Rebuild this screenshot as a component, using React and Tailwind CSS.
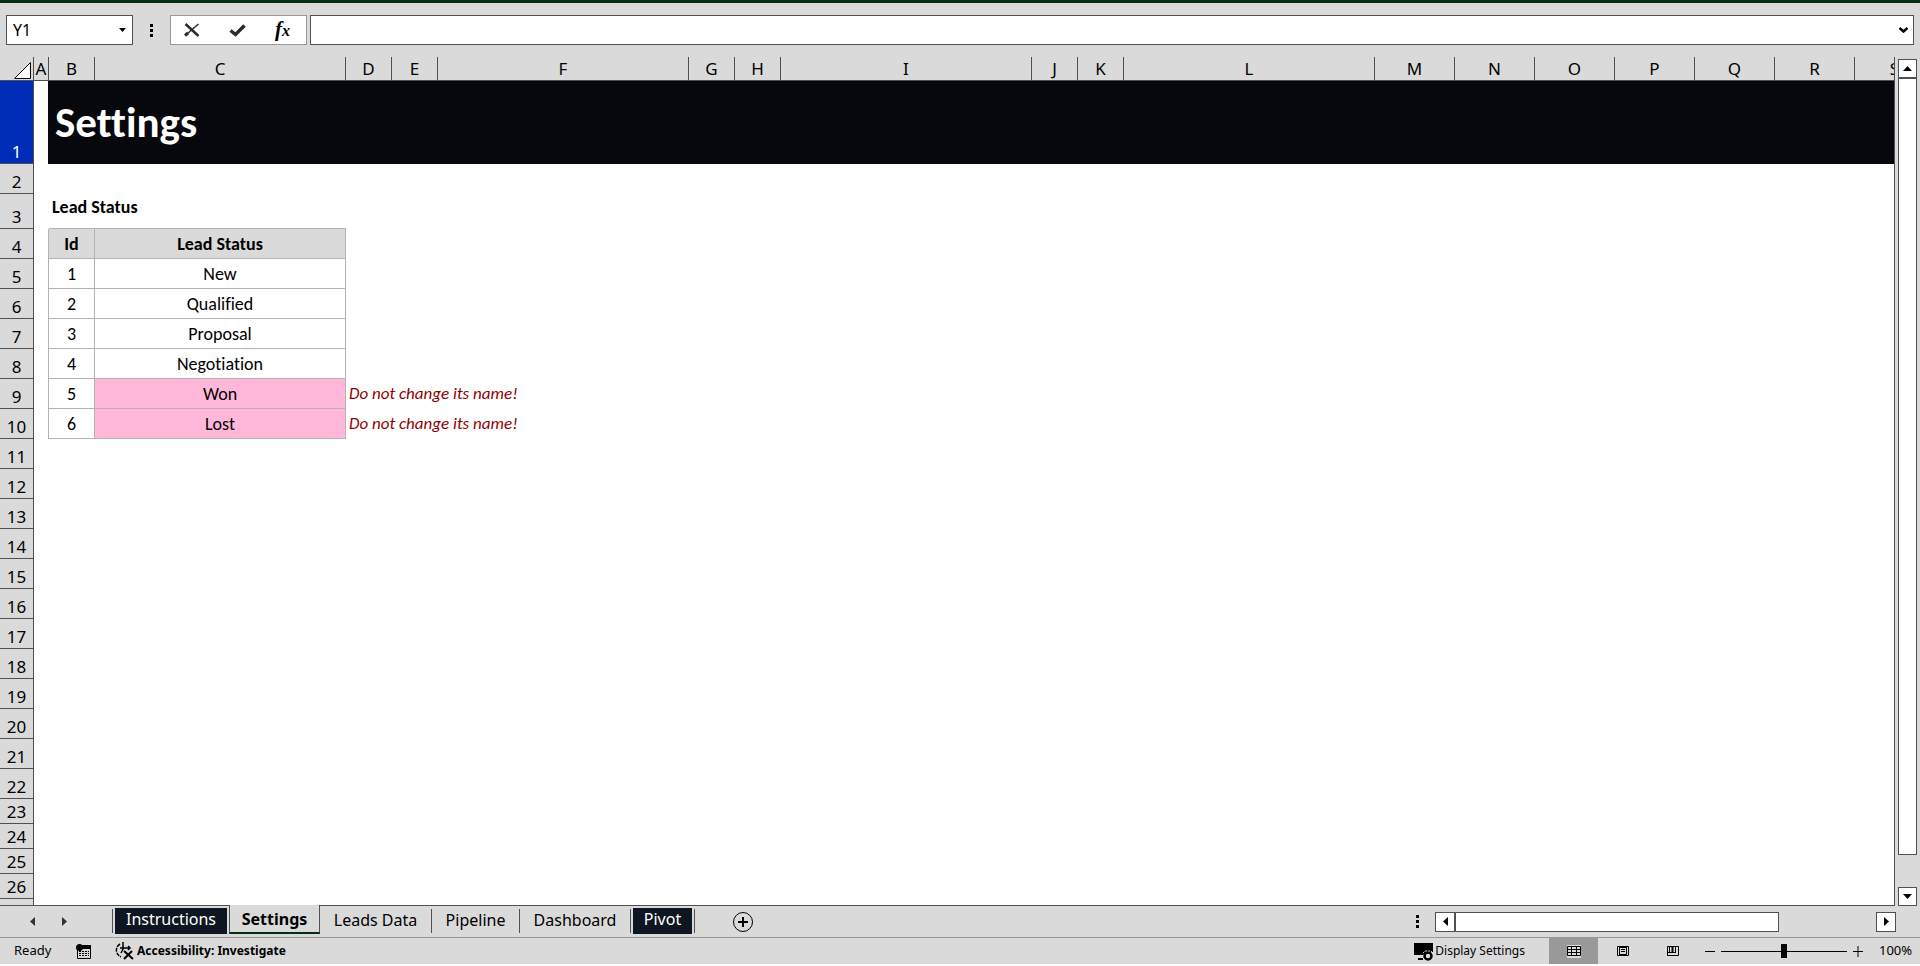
import { useState } from 'react';

const columns = [
  { name: 'A', width: 'w-[15px]' },
  { name: 'B', width: 'w-[46px]' },
  { name: 'C', width: 'w-[251px]' },
  { name: 'D', width: 'w-[46px]' },
  { name: 'E', width: 'w-[46px]' },
  { name: 'F', width: 'w-[251px]' },
  { name: 'G', width: 'w-[46px]' },
  { name: 'H', width: 'w-[46px]' },
  { name: 'I', width: 'w-[251px]' },
  { name: 'J', width: 'w-[46px]' },
  { name: 'K', width: 'w-[46px]' },
  { name: 'L', width: 'w-[251px]' },
  { name: 'M', width: 'w-[80px]' },
  { name: 'N', width: 'w-[80px]' },
  { name: 'O', width: 'w-[80px]' },
  { name: 'P', width: 'w-[80px]' },
  { name: 'Q', width: 'w-[80px]' },
  { name: 'R', width: 'w-[80px]' },
  { name: 'S', width: 'w-[80px]' },
];

const statuses = [
  { id: 1, name: 'New' },
  { id: 2, name: 'Qualified' },
  { id: 3, name: 'Proposal' },
  { id: 4, name: 'Negotiation' },
  { id: 5, name: 'Won', locked: true },
  { id: 6, name: 'Lost', locked: true },
];

// rows below the status list, the last ones use the default height
const emptyRows = [11, 12, 13, 14, 15, 16, 17, 18, 19, 20, 21, 22, 23, 24, 25, 26];

const RowHeader = ({ n, selected }) => (
  <th
    scope="row"
    className={`border-r border-b border-[#505050] p-0 text-center align-bottom font-['Noto_Sans',sans-serif] text-[17px] leading-[23px] font-normal ${
      selected ? 'bg-[#002db8] text-white' : 'bg-[#dadada]'
    }`}
  >
    {n}
  </th>
);

const ColumnHeaders = () => (
  <thead>
    <tr className="h-6">
      <th className="border-r border-b border-[#505050] bg-[#dadada] p-0">
        <button aria-label="Select all" className="flex w-full justify-end pt-1 pr-0.5">
          <svg width="17" height="17" viewBox="0 0 17 17" fill="#fff" stroke="#000">
            <path d="M16.5 0.5v16h-16z" />
          </svg>
        </button>
      </th>
      {columns.map((col) => (
        <th
          key={col.name}
          scope="col"
          className="border-r border-b border-[#505050] bg-[#dadada] p-0 text-center text-[17px] leading-[23px] font-normal"
        >
          {col.name}
        </th>
      ))}
    </tr>
  </thead>
);

const Sheet = () => (
  <div className="min-w-0 flex-1 overflow-hidden border-r border-b border-[#505050] bg-white">
    <table className="w-[1935px] table-fixed border-separate border-spacing-0 [font-variant-ligatures:none]">
      <colgroup>
        <col className="w-[34px]" />
        {columns.map((col) => (
          <col key={col.name} className={col.width} />
        ))}
      </colgroup>
      <ColumnHeaders />
      <tbody>
        <tr className="h-[83px]">
          <RowHeader n={1} selected />
          <td className="border-r border-[#07080d]" />
          <td
            colSpan={18}
            className="bg-[#07080d] px-1.5 py-0 font-[Carlito,Lato,sans-serif] text-[43px] leading-[48px] font-bold text-white"
          >
            Settings
          </td>
        </tr>
        <tr className="h-[30px]">
          <RowHeader n={2} />
          <td colSpan={19} />
        </tr>
        <tr className="h-[35px] font-[Carlito,Lato,sans-serif] text-[18px] leading-5">
          <RowHeader n={3} />
          <td />
          <td colSpan={2} className="border-b border-[#b3b3b3] px-[3px] pt-0 pb-[11px] align-bottom font-bold">
            Lead Status
          </td>
          <td colSpan={16} />
        </tr>
        <tr className="h-[30px] text-center font-[Carlito,Lato,sans-serif] text-[18px] leading-5">
          <RowHeader n={4} />
          <td className="border-r border-[#b3b3b3]" />
          <td className="border-r border-b border-[#b3b3b3] bg-[#dadada] p-0 font-bold">Id</td>
          <td className="border-r border-b border-[#b3b3b3] bg-[#dadada] p-0 font-bold">Lead Status</td>
          <td colSpan={16} />
        </tr>
        {statuses.map((status) => (
          <tr key={status.id} className="h-[30px] text-center font-[Carlito,Lato,sans-serif] text-[18px] leading-5">
            <RowHeader n={status.id + 4} />
            <td className="border-r border-[#b3b3b3]" />
            <td className="border-r border-b border-[#b3b3b3] p-0">{status.id}</td>
            <td className={`border-r border-b border-[#b3b3b3] p-0 ${status.locked ? 'bg-[#ffb7da]' : ''}`}>
              {status.name}
            </td>
            <td colSpan={16} className="px-[3px] py-0 text-left text-[17px] text-[#900000] italic">
              {status.locked && 'Do not change its name!'}
            </td>
          </tr>
        ))}
        {emptyRows.map((n) => (
          <tr key={n} className={n > 22 ? 'h-[25px]' : 'h-[30px]'}>
            <RowHeader n={n} />
            <td colSpan={19} />
          </tr>
        ))}
        <tr className="h-[25px]">
          <RowHeader />
          <td colSpan={19} />
        </tr>
      </tbody>
    </table>
  </div>
);

const Dots = () => (
  <svg width="3" height="13" viewBox="0 0 3 13">
    <path d="M0 0h3v3H0zM0 5h3v3H0zM0 10h3v3H0z" />
  </svg>
);

const FormulaBar = () => {
  const [cell, setCell] = useState('Y1');
  const [formula, setFormula] = useState('');

  return (
    <div className="flex h-[42px] shrink-0 items-center pr-1.5 pl-1.5">
      <div className="flex h-[30px] w-[127px] items-center border border-[#505050] bg-white pr-1.5 pl-1.5">
        <input
          aria-label="Name box"
          value={cell}
          onChange={(e) => setCell(e.target.value)}
          className="min-w-0 flex-1 text-[16px] outline-none"
        />
        <button aria-label="Named cells">
          <svg width="7" height="4" viewBox="0 0 7 4">
            <path d="M0 0h7L3.500 4z" />
          </svg>
        </button>
      </div>
      <div className="flex w-[37px] justify-center">
        <Dots />
      </div>
      <div className="mr-[3px] flex h-[30px] w-[137px] items-center gap-[29px] border border-[#999] bg-white pl-[13px]">
        <button aria-label="Cancel">
          <svg width="16" height="14" viewBox="0 0 16 14" fill="none" stroke="#2b2b2b">
            <path d="M1.500 1l13 12" strokeWidth="2.500" />
            <path d="M14.500 1L8 6.500 1.500 12.500" strokeWidth="1.500" />
            <path d="M1 12.500l3-2.500" strokeWidth="3" />
          </svg>
        </button>
        <button aria-label="Enter">
          <svg width="17" height="13" viewBox="0 0 17 13" fill="none" stroke="#2b2b2b" strokeWidth="3.500">
            <path d="M1.500 6.500l5 4L15.500 1.500" />
          </svg>
        </button>
        <button
          aria-label="Insert function"
          className="font-[Liberation_Serif,serif] text-[21px] leading-5 font-bold italic"
        >
          f<span className="text-[16px]">x</span>
        </button>
      </div>
      <div className="flex h-[30px] flex-1 items-center border border-[#505050] bg-white pr-[5px]">
        <input
          aria-label="Formula"
          value={formula}
          onChange={(e) => setFormula(e.target.value)}
          className="min-w-0 flex-1 px-1.5 text-[16px] outline-none"
        />
        <button aria-label="Expand formula bar">
          <svg width="9" height="6" viewBox="0 0 9 6" fill="none" stroke="#000" strokeWidth="2.500">
            <path d="M0.500 1l4 3.500 4-3.500" />
          </svg>
        </button>
      </div>
    </div>
  );
};

const VerticalScroll = () => (
  <div className="flex w-[25px] shrink-0 flex-col pt-0.5 pl-[3px]">
    <button
      aria-label="Scroll up"
      className="flex h-[19px] w-[19px] items-center justify-center border border-[#505050] bg-white"
    >
      <svg width="9" height="5" viewBox="0 0 9 5">
        <path d="M4.500 0L9 5H0z" />
      </svg>
    </button>
    <div className="mb-8 w-[19px] flex-1 border border-[#505050] bg-white" />
    <button
      aria-label="Scroll down"
      className="flex h-[19px] w-[19px] items-center justify-center border border-[#505050] bg-white"
    >
      <svg width="9" height="5" viewBox="0 0 9 5">
        <path d="M0 0h9L4.500 5z" />
      </svg>
    </button>
  </div>
);

const Separator = () => <span className="mt-[3px] h-6 w-px bg-[#505050]" />;

const SheetTabs = () => (
  <div className="flex h-[31px] shrink-0 text-[16px] leading-[22px]">
    <div className="flex w-[112px] items-center pl-[30px]">
      <button aria-label="Previous sheet" className="mr-[27px]">
        <svg width="5" height="9" viewBox="0 0 5 9" fill="#333">
          <path d="M5 0v9L0 4.500z" />
        </svg>
      </button>
      <button aria-label="Next sheet">
        <svg width="5" height="9" viewBox="0 0 5 9" fill="#333">
          <path d="M0 0v9l5-4.500z" />
        </svg>
      </button>
    </div>
    <Separator />
    <button className="mx-0.5 mt-0.5 h-[26px] w-28 bg-[#0e1621] pb-1 text-white">Instructions</button>
    <button className="-mt-px h-[29px] w-[91px] border-x border-b-2 border-x-[#505050] border-b-[#052e12] bg-[#dadada] font-bold">
      Settings
    </button>
    <button className="h-[27px] w-[111px]">Leads Data</button>
    <Separator />
    <button className="h-[27px] w-[87px]">Pipeline</button>
    <Separator />
    <button className="h-[27px] w-[110px]">Dashboard</button>
    <Separator />
    <button className="mx-0.5 mt-0.5 h-[26px] w-[59px] bg-[#0e1621] pb-1 text-white">Pivot</button>
    <Separator />
    <button aria-label="New sheet" className="ml-[38px]">
      <svg width="20" height="20" viewBox="0 0 20 20" fill="none" stroke="#000">
        <circle cx="10" cy="10" r="9.500" />
        <path d="M10 5v10M5 10h10" strokeWidth="2" />
      </svg>
    </button>
    <div className="ml-auto flex w-[504px] items-center pr-6">
      <Dots />
      <button
        aria-label="Scroll left"
        className="ml-4 flex h-5 w-[19px] items-center justify-center border border-r-0 border-[#505050] bg-white"
      >
        <svg width="5" height="9" viewBox="0 0 5 9">
          <path d="M5 0v9L0 4.500z" />
        </svg>
      </button>
      <div className="mr-[97px] h-5 flex-1 border border-l-2 border-[#505050] bg-white" />
      <button
        aria-label="Scroll right"
        className="flex h-5 w-5 items-center justify-center border border-[#505050] bg-white"
      >
        <svg width="5" height="9" viewBox="0 0 5 9">
          <path d="M0 0v9l5-4.500z" />
        </svg>
      </button>
    </div>
  </div>
);

const StatusBar = () => {
  const [zoom, setZoom] = useState(100);

  return (
    <div className="flex h-[27px] shrink-0 items-center border-t border-[#999] pl-3.5 text-[13px]">
      <span className="w-[62px]">Ready</span>
      <button aria-label="Macro recording" className="mr-6">
        <svg width="15" height="15" viewBox="0 0 15 15">
          <path d="M5 1h10v4H1V3z" />
          <circle cx="3.500" cy="3.500" r="3.500" />
          <path d="M1.500 4v10.500h13V4" fill="none" stroke="#000" />
          <path d="M3 7.500h10M3 9.500h10M3 11.500h10" stroke="#000" strokeDasharray="2 1" />
        </svg>
      </button>
      <button className="flex items-center gap-[3px] text-[12px] font-bold">
        <svg width="19" height="18" viewBox="0 0 19 18" fill="none" stroke="#000" strokeWidth="1.500">
          <path d="M5 2C0 5 0 12 6 15" strokeDasharray="4 1" />
          <path d="M5 6h10M13 4l2 2-2 2M8 0v7l-2 4" />
          <path d="M9 9l9 8M17 9l-8 8" strokeWidth="2" />
        </svg>
        Accessibility: Investigate
      </button>
      <div className="ml-auto flex h-full items-center">
        <button className="mr-6 flex items-center text-[12px]">
          <svg width="21" height="19" viewBox="0 0 21 19">
            <path d="M0 1h19v9h-7l-3 3H0zM4 16h5v2H4z" />
            <circle cx="14" cy="14" r="3.500" fill="none" stroke="#000" strokeWidth="2.500" />
            <path d="M9 11l2-2h6l2 2" fill="none" stroke="#dadada" strokeDasharray="2 1" />
          </svg>
          Display Settings
        </button>
        <button aria-label="Normal view" className="flex h-full w-[49px] items-center justify-center bg-[#999]">
          <svg width="14" height="13" viewBox="0 0 14 13" fill="#dadada" stroke="#000">
            <path d="M0 0h14v13H0z" stroke="none" />
            <path d="M0.500 1.500h13v9H0.500zM0 4.500h14M0 7.500h14M4.500 1v10M9.500 1v10" />
          </svg>
        </button>
        <button aria-label="Page layout" className="flex h-full w-[50px] items-center justify-center">
          <svg width="12" height="10" viewBox="0 0 12 10" fill="none" stroke="#000">
            <path d="M0.500 0.500h11v9H0.500zM2.500 1v8M9.500 1v8M2 1.500h8M4 3.500h4M4 5.500h4M2 8.500h8" />
          </svg>
        </button>
        <button aria-label="Page break preview" className="flex h-full w-[50px] items-center justify-center">
          <svg width="12" height="10" viewBox="0 0 12 10" fill="none" stroke="#000">
            <path d="M0.500 0.500h11v9H0.500zM1 6.500h8M8.500 0v7M2.500 0v7" />
            <path d="M5.500 0v6" strokeWidth="2" />
          </svg>
        </button>
        <button aria-label="Zoom out" className="ml-[7px]" onClick={() => setZoom(zoom - 10)}>
          <svg width="10" height="11" viewBox="0 0 10 11" stroke="#000">
            <path d="M0 5.500h10" />
          </svg>
        </button>
        <input
          type="range"
          aria-label="Zoom"
          min="10"
          max="190"
          value={zoom}
          onChange={(e) => setZoom(Number(e.target.value))}
          className="mx-1.5 h-3.5 w-[126px] appearance-none bg-transparent [&::-webkit-slider-runnable-track]:h-px [&::-webkit-slider-runnable-track]:bg-black [&::-webkit-slider-thumb]:-mt-[7px] [&::-webkit-slider-thumb]:h-3.5 [&::-webkit-slider-thumb]:w-1.5 [&::-webkit-slider-thumb]:appearance-none [&::-webkit-slider-thumb]:bg-black"
        />
        <button aria-label="Zoom in" onClick={() => setZoom(zoom + 10)}>
          <svg width="10" height="11" viewBox="0 0 10 11" stroke="#000">
            <path d="M0 5.500h10M5 0v11" />
          </svg>
        </button>
        <button className="w-[57px] pl-4 text-left">{zoom}%</button>
      </div>
    </div>
  );
};

const App = () => {
  return (
    <div className="h-screen bg-white pb-0.5 font-['Noto_Sans',sans-serif] text-black">
      <div className="flex h-full flex-col border-t-3 border-[#052e12] bg-[#dadada] pt-1.5">
        <FormulaBar />
        <div className="mt-1.5 flex min-h-0 flex-1">
          <Sheet />
          <VerticalScroll />
        </div>
        <SheetTabs />
        <StatusBar />
      </div>
    </div>
  );
};

export default App;
